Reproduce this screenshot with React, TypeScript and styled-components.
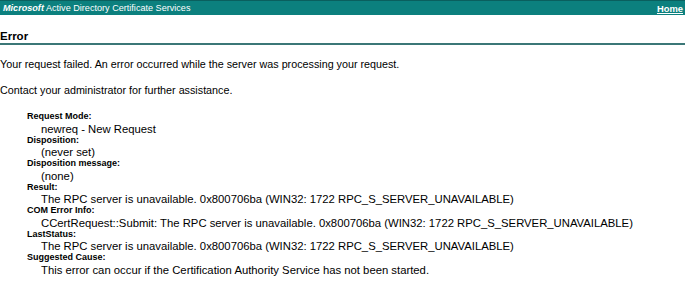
import React from 'react';
import styled, { createGlobalStyle } from 'styled-components';

const GlobalStyle = createGlobalStyle`
    body {
        margin: 0;
        background: #fff;
        color: #000;
        font-family: "Liberation Sans", Arial, sans-serif;
    }
`;

const HeaderBar = styled.div`
    display: flex;
    align-items: center;
    justify-content: space-between;
    height: 15px;
    padding: 0 2px 0 3px;
    background-color: #0c807e;
    border-top: 1px solid #0a5f5e;
    box-sizing: border-box;
    color: #fff;
    font-size: 9.1px;
    white-space: nowrap;
`;

const Brand = styled.span`
    font-weight: bold;
    font-style: italic;
`;

const HomeLink = styled.a`
    color: #fff;
    font-weight: bold;
    font-size: 9.4px;
    text-decoration: underline;
`;

const Title = styled.h1`
    margin: 15px 0 0;
    font-size: 11.5px;
    line-height: 13px;
    font-weight: bold;
    border-bottom: 2px solid #3b7777;
`;

const Message = styled.p`
    margin: 13px 0;
    font-size: 10.75px;
    line-height: 13px;
    white-space: nowrap;
`;

const Details = styled.dl`
    margin: 14px 0 0;
    padding-left: 27px;
`;

const Label = styled.dt`
    font-size: 9px;
    line-height: 11.5px;
    font-weight: bold;
`;

const Value = styled.dd`
    margin: 0 0 0 14px;
    font-size: 11.3px;
    line-height: 12px;
    white-space: nowrap;
`;

const rows = [
    ['Request Mode:', 'newreq - New Request'],
    ['Disposition:', '(never set)'],
    ['Disposition message:', '(none)'],
    ['Result:', 'The RPC server is unavailable. 0x800706ba (WIN32: 1722 RPC_S_SERVER_UNAVAILABLE)'],
    ['COM Error Info:', 'CCertRequest::Submit: The RPC server is unavailable. 0x800706ba (WIN32: 1722 RPC_S_SERVER_UNAVAILABLE)'],
    ['LastStatus:', 'The RPC server is unavailable. 0x800706ba (WIN32: 1722 RPC_S_SERVER_UNAVAILABLE)'],
    ['Suggested Cause:', 'This error can occur if the Certification Authority Service has not been started.'],
];

export default function App() {
    return (
        <>
            <GlobalStyle />
            <HeaderBar>
                <span><Brand>Microsoft</Brand> Active Directory Certificate Services</span>
                <HomeLink href="#">Home</HomeLink>
            </HeaderBar>
            <Title>Error</Title>
            <Message>Your request failed. An error occurred while the server was processing your request.</Message>
            <Message>Contact your administrator for further assistance.</Message>
            <Details>
                {rows.map(([label, value]) => (
                    <React.Fragment key={label}>
                        <Label>{label}</Label>
                        <Value>{value}</Value>
                    </React.Fragment>
                ))}
            </Details>
        </>
    );
}
